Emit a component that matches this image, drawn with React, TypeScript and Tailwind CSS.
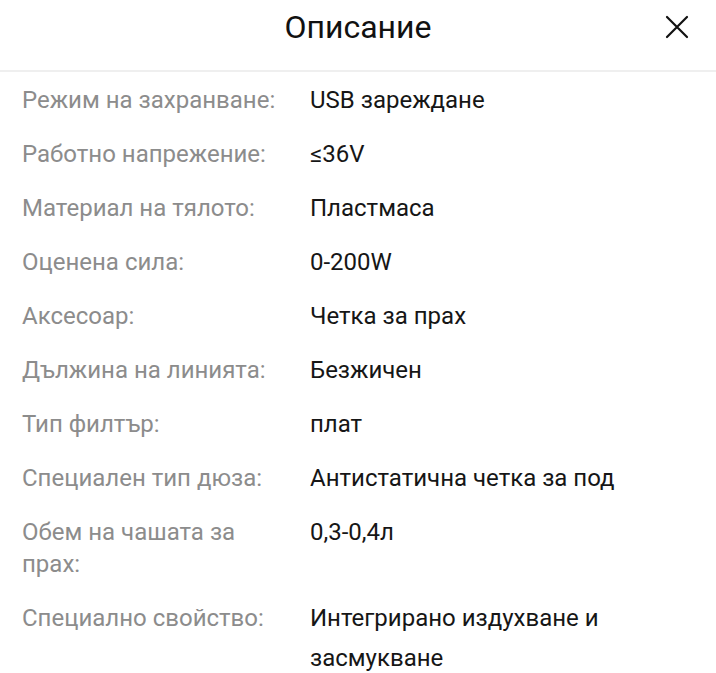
const rows: { label: string; value: string }[] = [
  { label: 'Режим на захранване:', value: 'USB зареждане' },
  { label: 'Работно напрежение:', value: '≤36V' },
  { label: 'Материал на тялото:', value: 'Пластмаса' },
  { label: 'Оценена сила:', value: '0-200W' },
  { label: 'Аксесоар:', value: 'Четка за прах' },
  { label: 'Дължина на линията:', value: 'Безжичен' },
  { label: 'Тип филтър:', value: 'плат' },
  { label: 'Специален тип дюза:', value: 'Антистатична четка за под' },
  { label: 'Обем на чашата за прах:', value: '0,3-0,4л' },
  { label: 'Специално свойство:', value: 'Интегрирано издухване и засмукване' },
]

function CloseIcon() {
  return (
    <svg width="24" height="24" viewBox="0 0 24 24" fill="none" stroke="currentColor" strokeWidth="2.2" strokeLinecap="round">
      <path d="M2 2L22 22M22 2L2 22" />
    </svg>
  )
}

export default function App() {
  return (
    <div className="w-[716px] h-[673px] overflow-hidden bg-white font-['Roboto','Noto_Sans',sans-serif]">
      <div className="relative flex h-[72px] justify-center pt-[7px] border-b-2 border-[#efefef]">
        <h1 className="text-[32px] leading-[40px] text-[#111]">Описание</h1>
        <button className="absolute right-[27px] top-[15px] text-[#111]">
          <CloseIcon />
        </button>
      </div>
      <div className="pl-[22px] pr-[20px] pt-[1px]">
        {rows.map((row) => (
          <div key={row.label} className="flex items-start py-[7px]">
            <div className="w-[288px] shrink-0 pr-[16px] py-[4px] text-[24px] leading-[32px] text-[#8c8c8c]">
              {row.label}
            </div>
            <div className="w-[340px] text-[24px] leading-[40px] text-[#161616]">{row.value}</div>
          </div>
        ))}
      </div>
    </div>
  )
}
